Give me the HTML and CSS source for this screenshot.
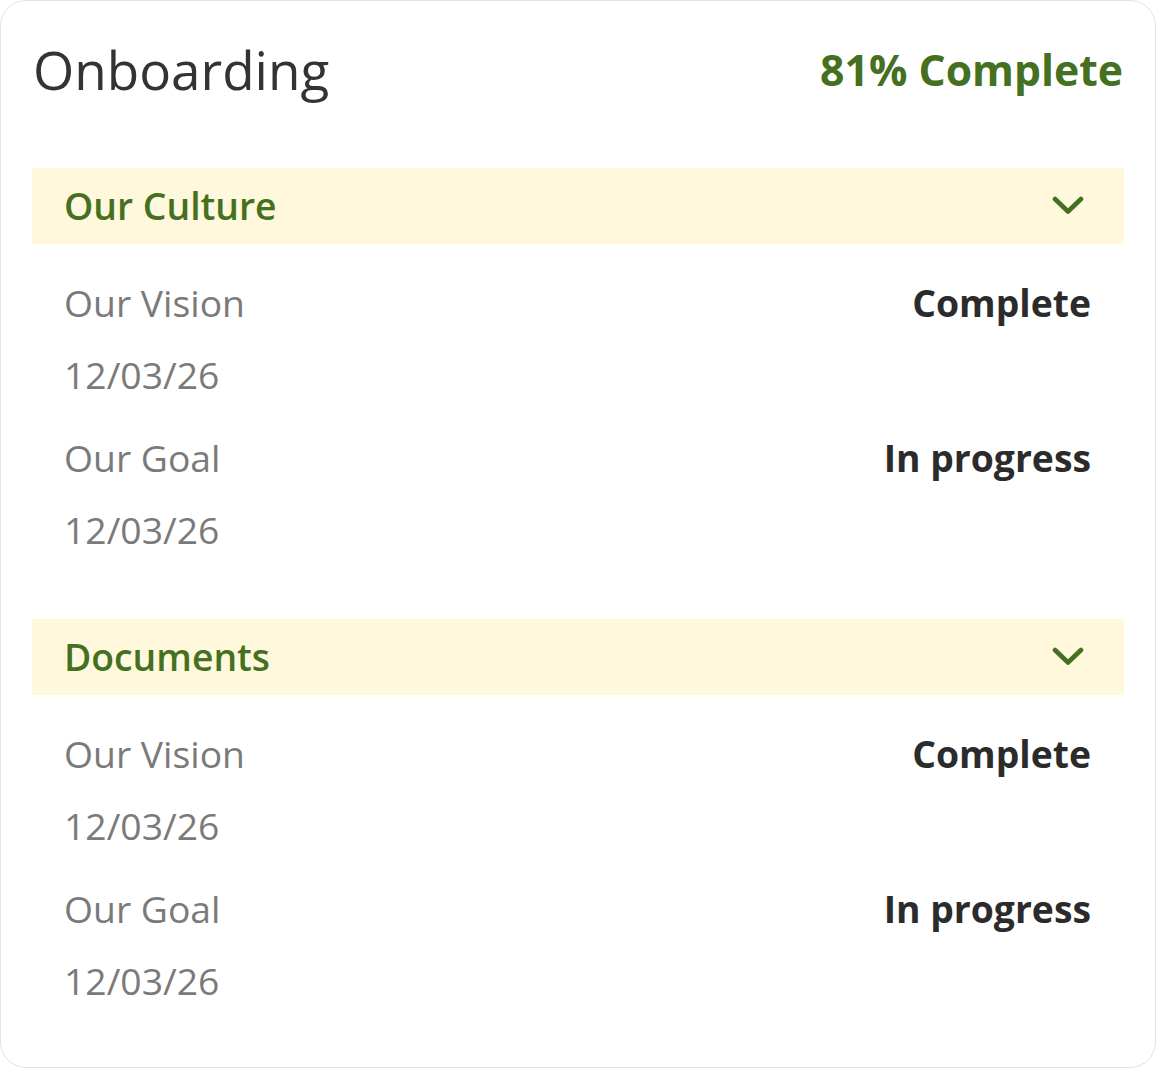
FILE: index.html
```html
<!DOCTYPE html>
<html>
<head>
<meta charset="utf-8">
<link rel="stylesheet" href="styles.css">
</head>
<body>
<div class="card">
  <div class="top">
    <h1 class="title">Onboarding</h1>
    <div class="progress">81% Complete</div>
  </div>

  <section class="section">
    <div class="section-head">
      <span class="section-title">Our Culture</span>
      <svg class="chev" width="32" height="19" viewBox="0 0 32 19"><path d="M3 3 L16 15.5 L29 3" fill="none" stroke="#44701f" stroke-width="4.6" stroke-linecap="round" stroke-linejoin="round"/></svg>
    </div>
    <div class="items">
      <div class="item">
        <div class="row"><span class="name">Our Vision</span><span class="status">Complete</span></div>
        <div class="date">12/03/26</div>
      </div>
      <div class="item">
        <div class="row"><span class="name">Our Goal</span><span class="status">In progress</span></div>
        <div class="date">12/03/26</div>
      </div>
    </div>
  </section>

  <section class="section">
    <div class="section-head">
      <span class="section-title">Documents</span>
      <svg class="chev" width="32" height="19" viewBox="0 0 32 19"><path d="M3 3 L16 15.5 L29 3" fill="none" stroke="#44701f" stroke-width="4.6" stroke-linecap="round" stroke-linejoin="round"/></svg>
    </div>
    <div class="items">
      <div class="item">
        <div class="row"><span class="name">Our Vision</span><span class="status">Complete</span></div>
        <div class="date">12/03/26</div>
      </div>
      <div class="item">
        <div class="row"><span class="name">Our Goal</span><span class="status">In progress</span></div>
        <div class="date">12/03/26</div>
      </div>
    </div>
  </section>
</div>
</body>
</html>
```

FILE: styles.css
```css
html, body {
  margin: 0;
  padding: 0;
  background: #ffffff;
}
body {
  font-family: "Open Sans", "Noto Sans", sans-serif;
}
.card {
  box-sizing: border-box;
  width: 1156px;
  height: 1068px;
  border: 1px solid #e2e2e2;
  border-radius: 26px;
  background: #ffffff;
  padding: 0 31px;
}
.top {
  display: flex;
  justify-content: space-between;
  align-items: center;
  height: 72px;
  margin-top: 33px;
  margin-bottom: 62px;
  padding: 0 1px 0 1px;
}
.title {
  margin: 0;
  font-size: 53px;
  font-weight: 400;
  color: #333333;
  line-height: 72px;
}
.progress {
  font-size: 42.7px;
  font-weight: 700;
  color: #44701f;
  line-height: 72px;
}
.section-head {
  display: flex;
  justify-content: space-between;
  align-items: center;
  height: 76px;
  background: #fff8dc;
  padding: 0 40px 0 32px;
}
.section-title {
  font-size: 37.3px;
  font-weight: 600;
  color: #44701f;
  line-height: 48px;
}
.chev {
  display: block;
  margin-top: -2px;
}
.items {
  padding: 35px 33px 65px 32px;
  display: flex;
  flex-direction: column;
  gap: 35px;
}
.item {
  display: flex;
  flex-direction: column;
  gap: 24px;
}
.row {
  display: flex;
  justify-content: space-between;
  align-items: center;
}
.name, .date {
  font-size: 37.3px;
  color: #7a7a7a;
  line-height: 48px;
}
.status {
  font-size: 37.3px;
  font-weight: 700;
  color: #2b2b2b;
  line-height: 48px;
}
```
